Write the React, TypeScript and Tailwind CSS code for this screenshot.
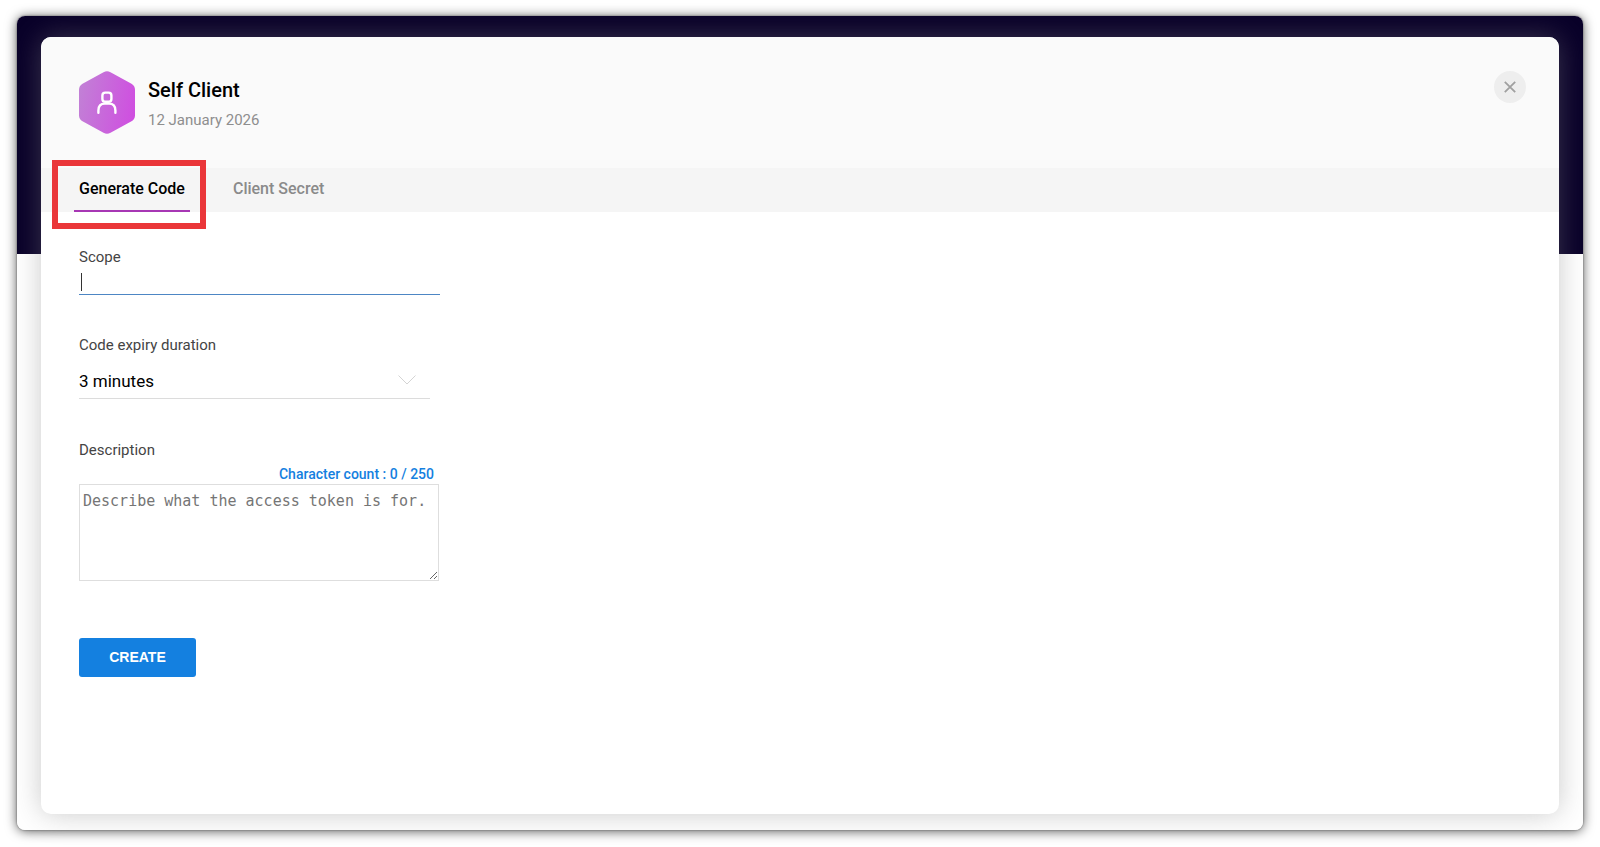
import { useState } from 'react';

const MAX_DESCRIPTION = 250;

const tabs = [
  { id: 'generate', label: 'Generate Code' },
  { id: 'secret', label: 'Client Secret' },
];

const durations = ['3 minutes', '5 minutes', '7 minutes', '10 minutes'];

function ClientBadge() {
  return (
    <svg viewBox="0 0 56 63" className="h-[63px] w-14 shrink-0" aria-hidden="true">
      <defs>
        <linearGradient id="badge" x1="0" y1="0.4" x2="1" y2="0.6">
          <stop offset="0" stopColor="#c27fd6" />
          <stop offset="1" stopColor="#cf4fe0" />
        </linearGradient>
      </defs>
      <path
        d="M24.5 1.2Q28-.8 31.5 1.2L52.5 12.8Q56 14.8 56 18.8V44.2Q56 48.2 52.5 50.2L31.5 61.8Q28 63.8 24.5 61.8L3.5 50.2Q0 48.2 0 44.2V18.8Q0 14.8 3.5 12.8Z"
        fill="url(#badge)"
      />
      <g fill="none" stroke="#fff" strokeWidth="2.4" strokeLinecap="round">
        <rect x="23.4" y="21.6" width="9" height="9.2" rx="2.8" />
        <path d="M19.4 41.8V39.4Q19.4 32.6 25.8 32.6H30Q36.4 32.6 36.4 39.4V41.8" />
      </g>
    </svg>
  );
}

function Header() {
  return (
    <header className="flex h-[131px] items-start justify-between bg-[#fafafa] pr-[33px] pl-[38px]">
      <div className="flex gap-[13px] pt-[34px]">
        <ClientBadge />
        <div className="pt-[5px]">
          <h1 className="text-[20px] leading-7 font-medium text-black">Self Client</h1>
          <p className="mt-1 text-[15px] leading-6 text-[#8e8e8e]">12 January 2026</p>
        </div>
      </div>
      <button
        type="button"
        aria-label="Close"
        className="mt-[34px] flex size-8 items-center justify-center rounded-full bg-[#eeeeee] text-[#a0a0a0]"
      >
        <svg viewBox="0 0 12 12" className="size-3" fill="none" stroke="currentColor" strokeWidth="1.8">
          <path d="M.8.8 11.2 11.2M11.2.8.8 11.2" />
        </svg>
      </button>
    </header>
  );
}

export default function App() {
  const [activeTab, setActiveTab] = useState('generate');
  const [scope, setScope] = useState('');
  const [duration, setDuration] = useState(durations[0]);
  const [description, setDescription] = useState('');

  return (
    <div className="flex min-h-screen flex-col bg-white px-[17px] pt-4 pb-[17px] font-['Roboto',sans-serif]">
      <div className="flex flex-1 flex-col rounded-lg bg-[linear-gradient(#090029_238px,#ffffff_238px)] px-6 pt-[21px] pb-4 shadow-[0_1px_12px_rgba(0,0,0,0.65),0_0_2px_rgba(0,0,0,0.5)]">
        <main className="flex flex-1 flex-col overflow-hidden rounded-[10px] bg-white shadow-[0_0_28px_rgba(128,128,128,0.42)]">
          <Header />

          <nav role="tablist" className="flex h-11 gap-[38px] bg-[#f5f5f5] pl-[33px]">
            {tabs.map((tab) => {
              const active = tab.id === activeTab;
              return (
                <div key={tab.id} className="relative flex">
                  <button
                    type="button"
                    role="tab"
                    aria-selected={active}
                    onClick={() => setActiveTab(tab.id)}
                    className={`border-b-2 px-[5px] text-[16px] font-medium ${
                      active ? 'border-[#a737b4] text-black' : 'border-transparent text-[#8a8a8a]'
                    }`}
                  >
                    {tab.label}
                  </button>
                  {active && (
                    <span className="pointer-events-none absolute -top-2 -right-4 -bottom-[17px] -left-[22px] border-[6px] border-[#ea3639]" />
                  )}
                </div>
              );
            })}
          </nav>

          <form className="flex flex-col items-start px-[38px] pt-[35px]" onSubmit={(e) => e.preventDefault()}>
            <label htmlFor="scope" className="text-[15px] leading-5 text-[#444444]">
              Scope
            </label>
            <div className="relative w-[361px] max-w-full">
              <input
                id="scope"
                value={scope}
                onChange={(e) => setScope(e.target.value)}
                className="block h-7 w-full border-b border-[#4d86c4] px-[2px] text-[16px] caret-transparent outline-none"
              />
              {scope === '' && <span className="absolute top-[6px] left-[2px] h-[18px] w-px bg-[#333333]" />}
            </div>

            <label htmlFor="duration" className="mt-10 text-[15px] leading-5 text-[#444444]">
              Code expiry duration
            </label>
            <div className="relative mt-[10px] w-[351px] max-w-full">
              <select
                id="duration"
                value={duration}
                onChange={(e) => setDuration(e.target.value)}
                className="block h-[34px] w-full appearance-none border-b border-[#dcdcdc] text-[17px] text-black outline-none"
              >
                {durations.map((d) => (
                  <option key={d}>{d}</option>
                ))}
              </select>
              <svg
                viewBox="0 0 18 10"
                className="pointer-events-none absolute top-[10px] right-[14px] h-[10px] w-[18px]"
                fill="none"
                stroke="#d4d4d4"
              >
                <path d="M.5.5 9 9 17.5.5" />
              </svg>
            </div>

            <label htmlFor="description" className="mt-[41px] text-[15px] leading-5 text-[#444444]">
              Description
            </label>
            <div className="w-[360px] max-w-full">
              <p className="mt-1 pr-[5px] text-right text-[14px] leading-5 font-medium text-[#1480e0]">
                Character count : {description.length} / {MAX_DESCRIPTION}
              </p>
              <textarea
                id="description"
                value={description}
                maxLength={MAX_DESCRIPTION}
                onChange={(e) => setDescription(e.target.value)}
                placeholder="Describe what the access token is for."
                className="block h-[97px] w-full resize border border-[#dedede] px-[3px] py-[6px] font-['DejaVu_Sans_Mono',monospace] text-[15px] leading-5 outline-none placeholder:text-[#757575]"
              />
            </div>

            <button
              type="submit"
              className="mt-[57px] h-[39px] w-[117px] rounded-[3px] bg-[#1480e0] font-['Liberation_Sans',sans-serif] text-[14px] font-bold text-white"
            >
              CREATE
            </button>
          </form>
        </main>
      </div>
    </div>
  );
}
